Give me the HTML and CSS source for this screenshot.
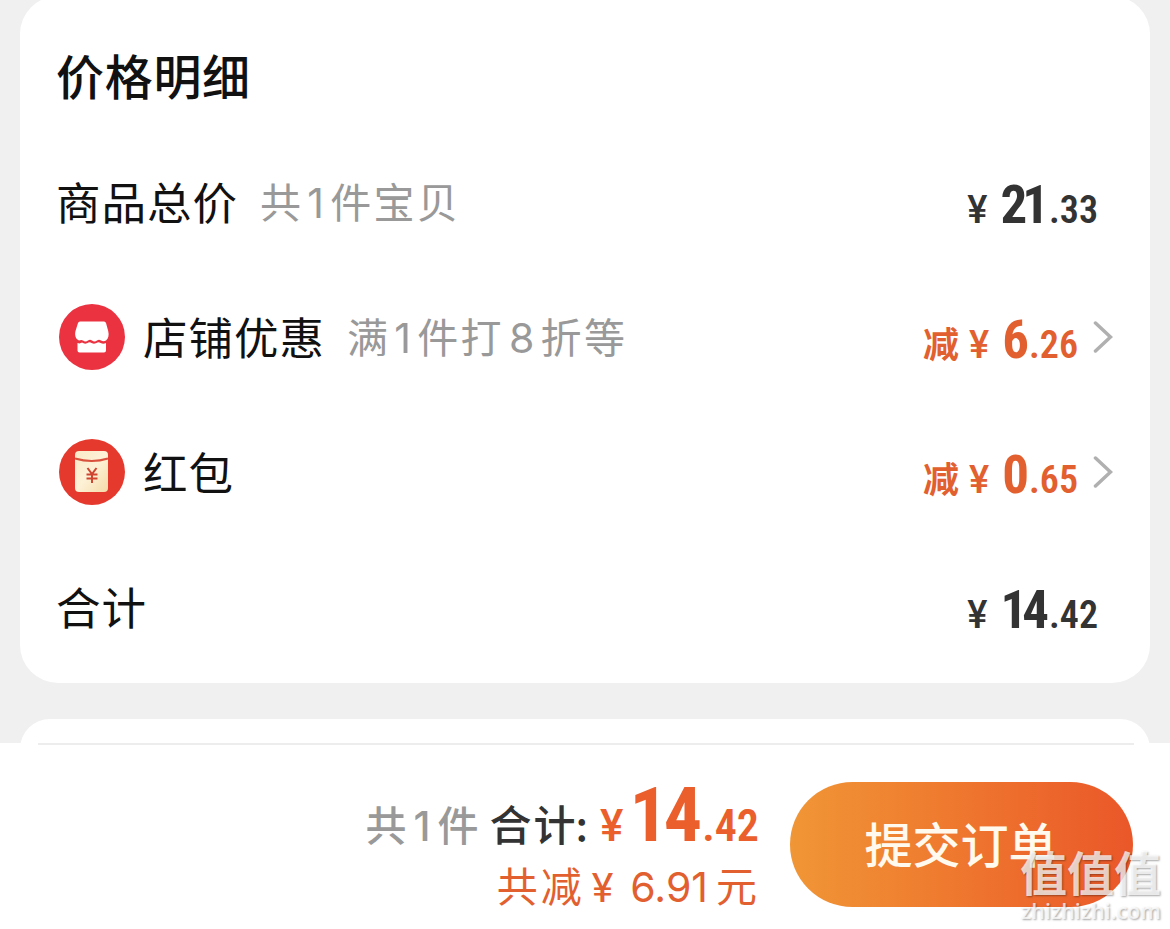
FILE: index.html
```
<!DOCTYPE html>
<html lang="zh-CN">
<head>
    <meta charset="UTF-8">
    <meta name="viewport" content="width=device-width, initial-scale=1.0">
    <title>价格明细</title>
    <link rel="stylesheet" href="styles.css">
</head>
<body>

<section class="card">
    <h2>价格明细</h2>

    <div class="row">
        <span class="label">商品总价</span>
        <span class="note">共<i class="one">1</i>件宝贝</span>
        <div class="price"><span class="yen">¥</span><span class="int">21</span><span class="dec">.33</span></div>
    </div>

    <div class="row">
        <svg class="icon" viewBox="0 0 66 66">
            <circle cx="33" cy="33" r="33" fill="#ea3241"/>
            <path d="M21.500 17.500h23.500q1.500 0 2 1.500l2.200 8c1 4 .3 7.500-2.200 9.500-1.500 1-3.500 1-5 0-1.500-1-2.500-1-4 0-1.500 1.200-3.500 1.200-5 0-1.500-1-2.500-1-4 0-1.500 1.200-3.500 1.200-5 0-1.500-1-2.500-.5-4 0-3.500-1.500-4.500-5.500-3.500-9.500l2.500-8q.5-1.500 2-1.500z" fill="#fff"/>
            <path d="M18.500 39c2 .8 3.500.3 4.500-.4 2 1.400 4.500 1.400 6.500 0q1-.6 2 0c2 1.500 5 1.500 7 0q1-.6 2 0c2 1.300 4.500 1.300 6.500.4v7.500q0 2-2 2h-24.500q-2 0-2-2z" fill="#fff"/>
        </svg>
        <span class="label">店铺优惠</span>
        <span class="note">满<i class="one">1</i>件打<i class="eight">8</i>折等</span>
        <div class="price off"><span class="cut">减</span><span class="yen">¥</span><span class="int">6</span><span class="dec">.26</span></div>
        <svg class="arrow" viewBox="0 0 20 32"><path d="M2.500 2l15 14-15 14"/></svg>
    </div>

    <div class="row">
        <svg class="icon" viewBox="0 0 66 66">
            <defs>
                <linearGradient id="paper" x1="0" y1="0" x2="1" y2="1">
                    <stop offset="0" stop-color="#fbe9c8"/>
                    <stop offset="0.500" stop-color="#fdf1d6"/>
                    <stop offset="1" stop-color="#f5dba8"/>
                </linearGradient>
            </defs>
            <circle cx="33" cy="33" r="33" fill="#e6392d"/>
            <rect x="16" y="12" width="33" height="41" rx="4" fill="url(#paper)"/>
            <path d="M16 19.500q17 5 33 0" fill="none" stroke="#d9503c" stroke-width="2"/>
            <path d="M28.500 29l4.500 6 4.500-6M33 35v9M27.500 35.500h11M27.500 39.500h11" fill="none" stroke="#cf4530" stroke-width="2"/>
        </svg>
        <span class="label">红包</span>
        <div class="price off"><span class="cut">减</span><span class="yen">¥</span><span class="int">0</span><span class="dec">.65</span></div>
        <svg class="arrow" viewBox="0 0 20 32"><path d="M2.500 2l15 14-15 14"/></svg>
    </div>

    <div class="row">
        <span class="label">合计</span>
        <div class="price"><span class="yen">¥</span><span class="int">14</span><span class="dec">.42</span></div>
    </div>
</section>

<section class="card next"></section>

<footer class="bar">
    <div class="summary">
        <div class="total">
            <span class="count">共<i class="one">1</i>件</span>
            <span class="sum">合计<i class="colon">:</i></span>
            <div class="price big"><span class="yen">¥</span><span class="int">14</span><span class="dec">.42</span></div>
        </div>
        <div class="saved"><span class="word">共减</span><span class="yen">¥</span><span class="num">6.91</span>元</div>
    </div>
    <button class="submit">提交订单</button>
</footer>

<div class="watermark">
    <div class="wm-name">值值值</div>
    <div class="wm-url">zhizhizhi.com</div>
</div>

</body>
</html>
```
FILE: styles.css
```
* {
    box-sizing: border-box;
}
body {
    margin: 0;
    height: 929px;
    overflow: hidden;
    position: relative;
    display: flex;
    flex-direction: column;
    background-color: #f0f0f0;
    font-family: "Noto Sans CJK SC", sans-serif;
    color: #111;
}
i {
    font-style: normal;
}
.card {
    flex: none;
    height: 687px;
    margin: -4px 20px 0;
    padding: 11px 38px 0;
    border-radius: 38px;
    background: #fff;
}
.card.next {
    height: 60px;
    margin-top: 36px;
}
h2 {
    height: 127px;
    margin: 0;
    font-size: 48px;
    font-weight: 500;
    line-height: 135px;
    letter-spacing: 0.700px;
    margin-left: -2px;
}
.row {
    display: flex;
    align-items: center;
    height: 135px;
    margin-right: -1px;
}
.icon {
    width: 66px;
    height: 66px;
    margin: 0 19px 0 1px;
}
.label {
    margin-left: -2px;
    margin-top: -2px;
    font-size: 44.500px;
    line-height: 60px;
    letter-spacing: 1px;
}
.icon + .label {
    margin-left: -1px;
}
.note {
    margin-left: 22px;
    margin-top: -1px;
    color: #999;
    font-size: 41px;
    font-weight: 400;
    line-height: 60px;
    letter-spacing: 2.300px;
}
.one, .eight {
    font-family: Inter, sans-serif;
    margin: 0 4px;
}
.eight {
    margin-left: 5px;
}
.price {
    display: flex;
    align-items: baseline;
    margin-top: 12px;
    margin-left: auto;
    margin-right: 15px;
    color: #333;
    font-family: Roboto, sans-serif;
    font-weight: 700;
    line-height: 60px;
}
.price .yen {
    margin-right: 13px;
    font-size: 38px;
    font-weight: 500;
}
.price .int {
    margin-right: 5px;
    font-size: 53px;
    font-stretch: 75%;
    letter-spacing: -5px;
}
.price .dec {
    font-size: 38px;
    font-stretch: 85%;
    font-weight: 600;
}
.off {
    margin-right: 15px;
    color: #e2602f;
}
.cut {
    margin-right: 10px;
    font-family: "Noto Sans CJK SC", sans-serif;
    font-size: 36px;
    font-weight: 700;
}
.arrow {
    width: 20px;
    height: 32px;
    fill: none;
    stroke: #b0b0b0;
    stroke-width: 3.500;
    stroke-linecap: round;
}
.bar {
    position: relative;
    display: flex;
    flex: none;
    height: 186px;
    margin-top: -36px;
    background: #fff;
}
.bar::before {
    content: "";
    position: absolute;
    top: 0;
    left: 38px;
    right: 36px;
    height: 2px;
    background: #ededed;
}
.summary {
    width: 759px;
    padding-top: 42px;
}
.total {
    display: flex;
    justify-content: flex-end;
    align-items: baseline;
    height: 69px;
}
.count {
    color: #999;
    font-size: 41px;
    font-weight: 500;
    letter-spacing: 3px;
}
.sum {
    margin: 0 12px 0 8px;
    color: #333;
    font-size: 42px;
    font-weight: 500;
    letter-spacing: 2px;
}
.colon {
    margin-left: -2px;
    letter-spacing: 0;
}
.big {
    margin: 0;
    color: #ea5f2c;
}
.big .yen {
    margin-right: 6px;
    font-size: 44px;
}
.big .int {
    margin-right: 4px;
    font-size: 76px;
    letter-spacing: -4px;
}
.big .dec {
    font-size: 44px;
}
.saved {
    display: flex;
    justify-content: flex-end;
    align-items: baseline;
    color: #e2602f;
    font-size: 41px;
    line-height: 60px;
    padding-right: 2px;
}
.saved .word {
    letter-spacing: 3px;
}
.saved .yen {
    margin: 0 17px 0 7px;
    font-family: Roboto, sans-serif;
}
.saved .num {
    margin-right: 8px;
    font-family: Inter, sans-serif;
}
.submit {
    width: 343px;
    height: 125px;
    margin: 39px 0 0 31px;
    padding: 0 2px 6px 0;
    border: 0;
    border-radius: 63px;
    background: linear-gradient(90deg, #f09636, #ef7a2f 45%, #ea5729);
    color: #fff9ee;
    font-family: inherit;
    font-size: 48px;
    font-weight: 500;
}
.watermark {
    position: absolute;
    right: 9px;
    bottom: 5px;
    color: rgba(255, 255, 255, 0.750);
    text-shadow: 1px 1px 2px rgba(0, 0, 0, 0.350);
    text-align: right;
}
.wm-name {
    font-size: 47px;
    font-weight: 700;
    line-height: 54px;
}
.wm-url {
    font-family: "Open Sans", sans-serif;
    font-size: 21.500px;
    font-weight: 600;
    line-height: 26px;
}
```
